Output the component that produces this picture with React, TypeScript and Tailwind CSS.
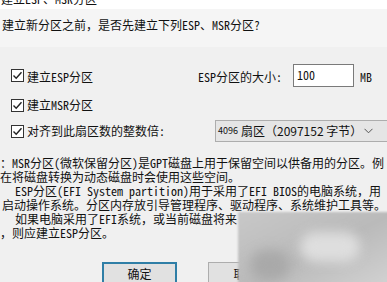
import React from "react";

const FONT = "'Noto Sans Mono CJK SC', 'Noto Sans CJK SC', 'Liberation Mono', monospace";
const SANS = "'Noto Sans CJK SC', 'Liberation Sans', sans-serif";

function Check() {
  return (
    <div className="w-[13px] h-[13px] border border-[#333333] bg-white flex items-center justify-center shrink-0">
      <svg width="11" height="11" viewBox="0 0 11 11">
        <path d="M1.5 5.5 L4.2 8.2 L9.5 2.2" fill="none" stroke="#222222" strokeWidth="1.4" />
      </svg>
    </div>
  );
}

export default function App() {
  return (
    <div
      className="relative w-[387px] h-[282px] overflow-hidden bg-[#f0f0f0] text-[#111111] text-[12px]"
      style={{ fontFamily: FONT }}
    >
      {/* title strip, cut off at the top */}
      <div className="h-[9px] bg-white overflow-hidden">
        <div className="-mt-[9px] pl-[1px] leading-[16px] whitespace-nowrap">建立ESP、MSR分区</div>
      </div>

      <div className="bg-[#f5f5f5] pb-[14px]">
        <div className="pt-[8px] pl-[2px] leading-[16px] whitespace-nowrap">
          建立新分区之前，是否先建立下列ESP、MSR分区?
        </div>
      </div>

      {/* options */}
      <div className="mt-[17px] flex flex-col">
        <div className="flex items-center h-[23px]">
          <div className="w-[198px] flex items-center pl-[11px] gap-[3px] shrink-0">
            <Check />
            <span className="leading-[16px] mt-[2px]">建立ESP分区</span>
          </div>
          <span className="leading-[16px] mt-[2px] w-[95px] shrink-0">ESP分区的大小:</span>
          <div className="w-[61px] h-[23px] border border-[#7a7a7a] bg-white pl-[3px] leading-[20px] shrink-0">
            100
          </div>
          <span className="ml-[6px] leading-[16px] mt-[2px]">MB</span>
        </div>

        <div className="mt-[10px] flex items-center h-[16px] pl-[11px] gap-[3px]">
          <Check />
          <span className="leading-[16px]">建立MSR分区</span>
        </div>

        <div className="mt-[7px] flex items-center h-[22px]">
          <div className="w-[215px] flex items-center pl-[11px] gap-[3px] shrink-0">
            <Check />
            <span className="leading-[16px] whitespace-nowrap">对齐到此扇区数的整数倍:</span>
          </div>
          <div
            className="w-[176px] h-[22px] border border-[#adadad] bg-[#e5e5e5] flex items-center pl-[2px] whitespace-nowrap shrink-0"
            style={{ fontFamily: SANS }}
          >
            <span className="text-[9px] leading-[12px]">4096</span>
            <span className="ml-[3px] text-[12px] leading-[16px]">扇区（2097152 字节）</span>
            <svg className="ml-[2px]" width="9" height="6" viewBox="0 0 9 6">
              <path d="M0.5 0.8 L4.5 4.8 L8.5 0.8" fill="none" stroke="#555555" strokeWidth="1" />
            </svg>
          </div>
        </div>
      </div>

      {/* notes */}
      <div className="mt-[14px] flex flex-col leading-[14px] whitespace-nowrap">
        <div>：MSR分区(微软保留分区)是GPT磁盘上用于保留空间以供备用的分区。例</div>
        <div>在将磁盘转换为动态磁盘时会使用这些空间。</div>
        <div className="pl-[15px]">ESP分区(EFI System partition)用于采用了EFI BIOS的电脑系统，用</div>
        <div className="pl-[2px]">启动操作系统。分区内存放引导管理程序、驱动程序、系统维护工具等。</div>
        <div className="pl-[15px]">如果电脑采用了EFI系统，或当前磁盘将来</div>
        <div>，则应建立ESP分区。</div>
      </div>

      {/* buttons */}
      <div className="mt-[22px] flex pl-[102px] gap-[31px]">
        <div className="w-[75px] h-[23px] border-2 border-[#2f7ea6] bg-[#e1e1e1] flex items-center justify-center leading-[16px]">
          确定
        </div>
        <div className="w-[75px] h-[23px] border border-[#adadad] bg-[#e1e1e1] flex items-center justify-center leading-[16px]">
          取消
        </div>
      </div>

      {/* blurred watermark */}
      <div className="absolute left-[238px] top-[212px] right-[-10px] bottom-[-10px] bg-gradient-to-br from-[#c8c8c8] via-[#bababa] to-[#d6d6d6] blur-[1px]" />
      <div className="absolute left-[300px] top-[232px] w-[60px] h-[30px] bg-[#dedede] blur-[6px] rounded-full" />
      <div className="absolute left-[250px] top-[250px] w-[40px] h-[30px] bg-[#a9a9a9] blur-[6px] rounded-full" />
    </div>
  );
}
